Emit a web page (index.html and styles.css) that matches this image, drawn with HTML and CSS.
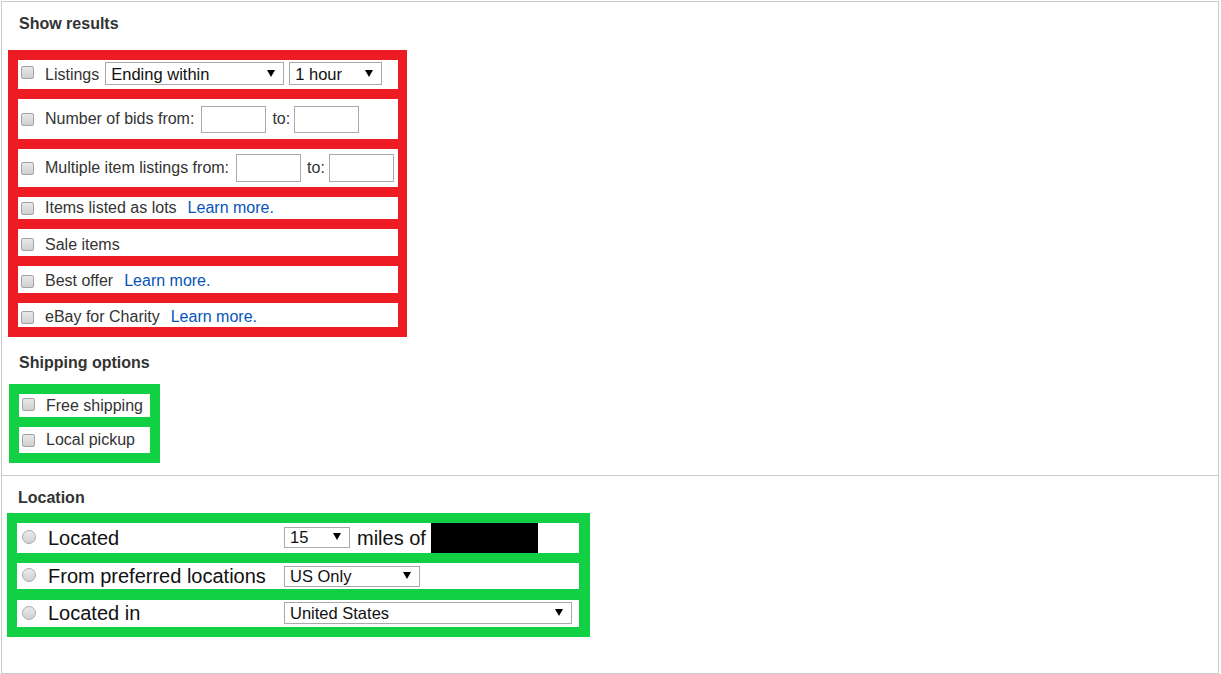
FILE: index.html
```html
<!DOCTYPE html>
<html lang="en">

<head>
    <meta charset="UTF-8">
    <title>Advanced search - options</title>
    <link rel="stylesheet" href="styles.css">
</head>

<body>

    <div class="panel">
        <!--Show results + shipping-->
        <div class="results">
            <p class="sec-title">Show results</p>

            <div class="hl-box red-box">
                <div class="opt-row r1">
                    <input type="checkbox" class="chk">
                    <span class="lbl">Listings</span>
                    <span class="sel sel-ending"><select>
                            <option>Ending within</option>
                        </select></span>
                    <span class="sel sel-hour"><select>
                            <option>1 hour</option>
                        </select></span>
                </div>

                <div class="opt-row r2">
                    <input type="checkbox" class="chk">
                    <span class="lbl">Number of bids from:</span>
                    <input type="text" class="num first">
                    <span class="lbl to">to:</span>
                    <input type="text" class="num">
                </div>

                <div class="opt-row r3">
                    <input type="checkbox" class="chk">
                    <span class="lbl">Multiple item listings from:</span>
                    <input type="text" class="num first">
                    <span class="lbl to">to:</span>
                    <input type="text" class="num">
                </div>

                <div class="opt-row r4">
                    <input type="checkbox" class="chk">
                    <span class="lbl">Items listed as lots</span>
                    <a href="#" class="more">Learn more.</a>
                </div>

                <div class="opt-row r5">
                    <input type="checkbox" class="chk">
                    <span class="lbl">Sale items</span>
                </div>

                <div class="opt-row r6">
                    <input type="checkbox" class="chk">
                    <span class="lbl">Best offer</span>
                    <a href="#" class="more">Learn more.</a>
                </div>

                <div class="opt-row r7">
                    <input type="checkbox" class="chk">
                    <span class="lbl">eBay for Charity</span>
                    <a href="#" class="more">Learn more.</a>
                </div>
            </div>

            <p class="sec-title ship-title">Shipping options</p>

            <div class="hl-box green-box ship-box">
                <div class="opt-row s1">
                    <input type="checkbox" class="chk">
                    <span class="lbl">Free shipping</span>
                </div>
                <div class="opt-row s2">
                    <input type="checkbox" class="chk">
                    <span class="lbl">Local pickup</span>
                </div>
            </div>
        </div>

        <!--Location-->
        <div class="location">
            <p class="sec-title">Location</p>

            <div class="hl-box green-box loc-box">
                <div class="loc-row l1">
                    <input type="radio" name="loc" class="rad">
                    <span class="loc-lbl">Located</span>
                    <span class="sel sel-miles"><select>
                            <option>15</option>
                        </select></span>
                    <span class="miles">miles of</span>
                    <span class="zip-hidden"></span>
                </div>
                <div class="loc-row l2">
                    <input type="radio" name="loc" class="rad">
                    <span class="loc-lbl">From preferred locations</span>
                    <span class="sel sel-pref"><select>
                            <option>US Only</option>
                        </select></span>
                </div>
                <div class="loc-row l3">
                    <input type="radio" name="loc" class="rad">
                    <span class="loc-lbl">Located in</span>
                    <span class="sel sel-country"><select>
                            <option>United States</option>
                        </select></span>
                </div>
            </div>
        </div>
    </div>

</body>

</html>
```

FILE: styles.css
```css
* {
    margin: 0px;
    padding: 0px;
    box-sizing: border-box;
}

body {
    font-family: "Liberation Sans", Arial, sans-serif;
    color: #333333;
    background-color: white;
}

.panel {
    margin: 1px 2px 0 1px;
    border: 1px solid #CCCCCC;
}

.results {
    padding: 0 0 12px 6px;
    border-bottom: 1px solid #CCCCCC;
}

.location {
    padding: 0 0 36px 5px;
}

.sec-title {
    margin: 12px 0 0 11px;
    font-size: 16px;
    line-height: 20px;
    font-weight: bold;
    color: #333333;
}

/*coloured frames round the option groups*/
.hl-box {
    display: flex;
    flex-direction: column;
    gap: 10px;
    padding: 10px;
}

.red-box {
    width: 399px;
    margin-top: 16px;
    padding-right: 9px;
    background-color: #ED1C24;
}

.green-box {
    background-color: #12D044;
}

.ship-title {
    margin-top: 16px;
}

.ship-box {
    width: 151px;
    margin: 11px 0 0 1px;
}

.loc-box {
    width: 583px;
    margin-top: 5px;
    padding-right: 11px;
}

.opt-row {
    display: flex;
    align-items: center;
    background-color: white;
    font-size: 16px;
    white-space: nowrap;
}

.r1 { height: 29px; }
.r2 { height: 40px; }
.r3 { height: 38px; }
.r4 { height: 22px; }
.r5 { height: 27px; padding-top: 4px; }
.r6 { height: 27px; padding-top: 3px; }
.r7 { height: 24px; padding-top: 4px; }
.s1 { height: 23px; }
.s2 { height: 26px; }

.chk {
    appearance: none;
    width: 13px;
    height: 13px;
    margin: 0 11px 0 3px;
    border: 1px solid #A3A3A3;
    border-radius: 2px;
    background: linear-gradient(#E8E8E8, #D0D0D0);
    flex-shrink: 0;
}

.r1 .chk {
    margin-top: -4px;
}

.s1 .chk {
    margin-top: -3px;
}

.lbl {
    color: #333333;
}

.to {
    margin-left: 6px;
}

.num {
    width: 65px;
    height: 27px;
    border: 1px solid #ABABAB;
}

.num.first {
    margin-left: 7px;
}

.to+.num {
    margin-left: 4px;
}

.r3 .num {
    height: 28px;
}

.more {
    margin-left: 11px;
    color: #0654BA;
    text-decoration: none;
}

/*select with a black arrow*/
.sel {
    position: relative;
    display: inline-block;
    margin-left: 5px;
}

.sel select {
    appearance: none;
    display: block;
    width: 100%;
    height: 100%;
    padding-left: 5px;
    border: 1px solid #A9A9A9;
    border-radius: 0;
    background-color: white;
    font-family: "Liberation Sans", Arial, sans-serif;
    font-size: 16.5px;
    color: #111111;
}

.sel::after {
    content: "";
    position: absolute;
    right: 9px;
    top: 50%;
    margin-top: -4px;
    border-left: 4px solid transparent;
    border-right: 4px solid transparent;
    border-top: 7px solid #000000;
}

.sel-ending {
    width: 179px;
    height: 23px;
    margin-top: -2px;
    margin-left: 6px;
}

.sel-hour {
    width: 93px;
    height: 23px;
    margin-top: -2px;
}

.loc-row {
    display: flex;
    align-items: center;
    background-color: white;
    white-space: nowrap;
}

.l1 { height: 30px; }
.l2 { height: 26px; margin-bottom: 1px; }
.l3 { height: 27px; }

.rad {
    appearance: none;
    width: 14px;
    height: 14px;
    margin: -2px 12px 0 5px;
    border: 1px solid #AAAAAA;
    border-radius: 50%;
    background: linear-gradient(#EBEBEB, #D0D0D0);
    flex-shrink: 0;
}

.loc-lbl {
    width: 236px;
    font-size: 20px;
    color: #111111;
}

.loc-row .sel {
    margin-left: 0;
}

.sel-miles {
    width: 66px;
    height: 21px;
    margin-top: -2px;
}

.sel-pref {
    width: 136px;
    height: 21px;
}

.sel-country {
    width: 288px;
    height: 22px;
    margin-top: -2px;
}

.miles {
    margin-left: 7px;
    font-size: 20px;
    color: #111111;
}

.zip-hidden {
    width: 107px;
    height: 30px;
    margin-left: 5px;
    background-color: #000000;
}
```
